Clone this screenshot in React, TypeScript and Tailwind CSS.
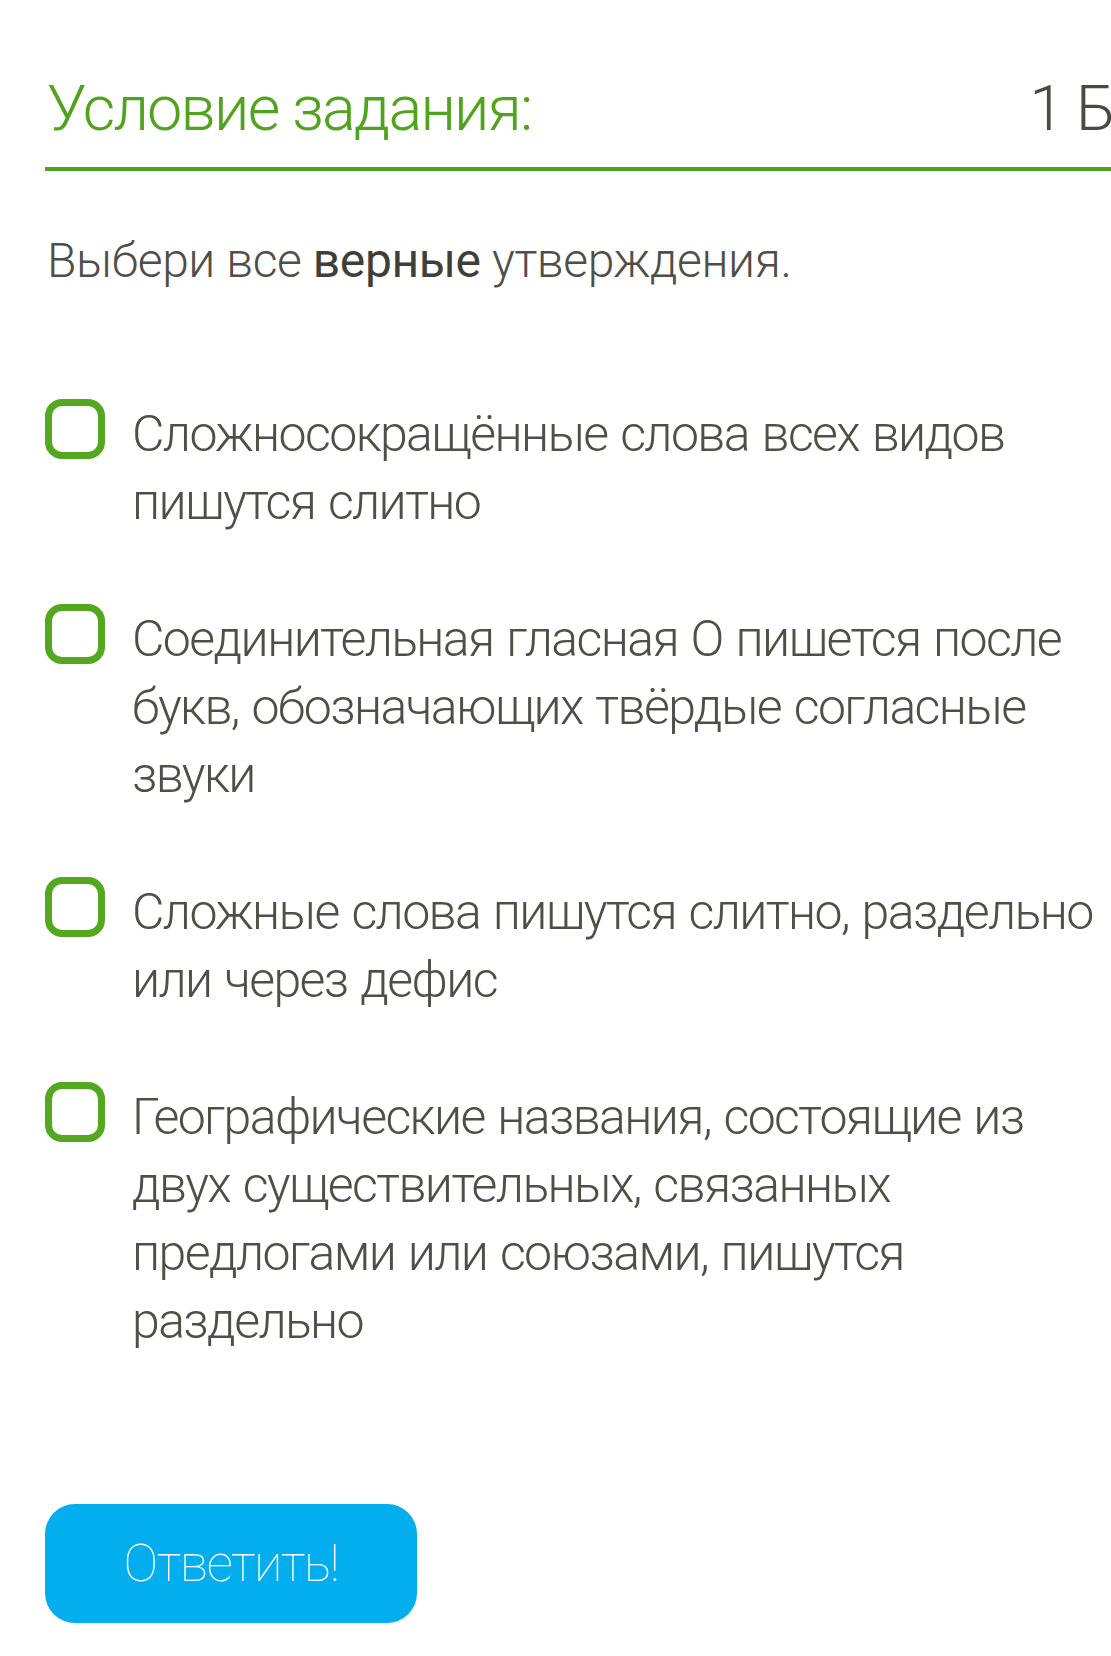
const options = [
  "Сложносокращённые слова всех видов пишутся слитно",
  "Соединительная гласная О пишется после букв, обозначающих твёрдые согласные звуки",
  "Сложные слова пишутся слитно, раздельно или через дефис",
  "Географические названия, состоящие из двух существительных, связанных предлогами или союзами, пишутся раздельно",
];

function Checkbox() {
  return (
    <span className="mt-[-1px] block h-[60px] w-[60px] shrink-0 rounded-[17px] border-[7px] border-[#53a81f] bg-white" />
  );
}

export default function App() {
  return (
    <div className="min-h-[1656px] w-[1111px] overflow-hidden bg-white font-['Roboto','Liberation_Sans',sans-serif] text-[#4f4f47]">
      <div className="pl-[45px] pt-[69px]">
        {/* header */}
        <div className="flex w-[1082px] items-start border-b-[4px] border-[#4fa31c] pb-[18px] pl-[2px]">
          <h1 className="text-[63px] font-light leading-[80px] tracking-[-1.8px] text-[#50a31c]">
            Условие задания:
          </h1>
          <span className="ml-auto whitespace-nowrap text-[63px] font-light leading-[80px] tracking-[-1.8px] text-[#4a4a44]">
            1 Б.
          </span>
        </div>

        <p className="mt-[56px] pl-[2px] text-[48px] font-light leading-[68px] tracking-[-0.4px]">
          Выбери все <span className="font-normal text-[#3f3f39]">верные</span>{" "}
          утверждения.
        </p>

        <div className="mt-[105px] flex w-[1066px] flex-col gap-[69px]">
          {options.map((text) => (
            <label key={text} className="flex items-start gap-[27px]">
              <Checkbox />
              <span className="text-[50px] font-light leading-[68px] tracking-[-1.6px] [word-spacing:2px]">
                {text}
              </span>
            </label>
          ))}
        </div>

        <button
          type="button"
          className="mt-[149px] flex h-[119px] w-[372px] items-center justify-center rounded-[30px] bg-[#02aeee] text-[52px] font-thin tracking-[-1.5px] text-white"
        >
          Ответить!
        </button>
      </div>
    </div>
  );
}
